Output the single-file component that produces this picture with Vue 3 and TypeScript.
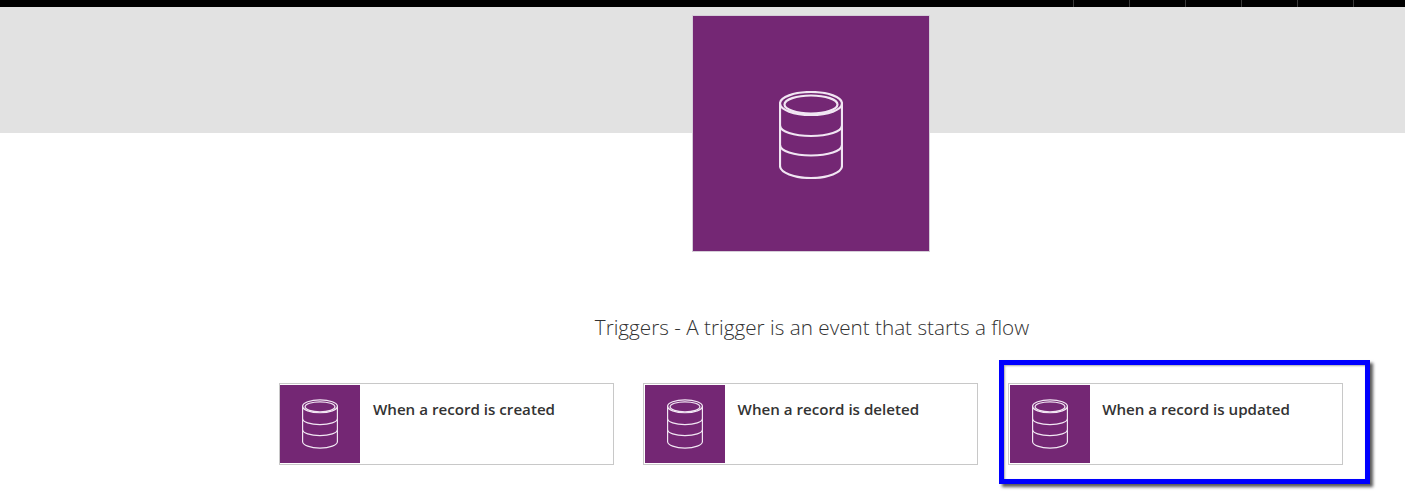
<script setup lang="ts">
const ticks: number[] = [0, 1, 2, 3, 4, 5];
const triggers: string[] = [
  "When a record is created",
  "When a record is deleted",
  "When a record is updated",
];
const highlighted = 2;
</script>

<template>
  <div class="page">
    <svg width="0" height="0" class="defs" aria-hidden="true">
      <symbol id="db" viewBox="0 0 64 88">
        <g fill="none" stroke="#f1e6f3" stroke-width="2.2">
          <ellipse cx="32" cy="12.5" rx="31" ry="11.5" />
          <ellipse cx="32" cy="13.5" rx="26.5" ry="9" />
          <path d="M1 12.5V75C1 81.5 15 87 32 87S63 81.5 63 75V12.5" />
          <path d="M1 34.5C1 40.5 15 45 32 45S63 40.5 63 34.5" />
          <path d="M1 54C1 60 15 64.5 32 64.5S63 60 63 54" />
        </g>
      </symbol>
    </svg>

    <header class="topbar">
      <span v-for="t in ticks" :key="t" class="tick"></span>
    </header>

    <section class="hero">
      <div class="tile">
        <svg class="icon-large"><use href="#db" /></svg>
      </div>
    </section>

    <h2 class="title">Triggers - A trigger is an event that starts a flow</h2>

    <div class="cards">
      <div v-for="(label, i) in triggers" :key="label" class="card">
        <div class="thumb">
          <svg class="icon-small"><use href="#db" /></svg>
        </div>
        <span class="label">{{ label }}</span>
        <div v-if="i === highlighted" class="callout"></div>
      </div>
    </div>
  </div>
</template>

<style scoped>
.page {
  width: 1405px;
  height: 495px;
  overflow: hidden;
  background: #fff;
  font-family: "Open Sans", "Noto Sans", sans-serif;
}
.defs {
  display: block;
  height: 0;
}
.topbar {
  height: 7px;
  background: #000;
  display: flex;
  justify-content: flex-end;
  margin-right: -4px;
}
.tick {
  width: 56px;
  box-sizing: border-box;
  border-left: 1px solid #3a3a3a;
}
.hero {
  height: 245px;
  box-sizing: border-box;
  padding: 8px 0 0 217px;
  display: flex;
  justify-content: center;
  background: linear-gradient(#e2e2e2 126px, #fff 126px);
}
.tile {
  width: 238px;
  height: 237px;
  box-sizing: border-box;
  border: 1px solid #d5cdd8;
  background: #742774;
  display: flex;
  align-items: center;
  justify-content: center;
}
.icon-large {
  width: 64px;
  height: 88px;
  margin-top: 2px;
}
.title {
  margin: 59px 0 0;
  padding-left: 219px;
  text-align: center;
  font-size: 20.7px;
  line-height: 32px;
  font-weight: 300;
  color: #333;
}
.cards {
  margin-top: 40px;
  padding-left: 278.7px;
  display: flex;
  gap: 29.6px;
}
.card {
  position: relative;
  width: 335px;
  height: 82px;
  box-sizing: border-box;
  border: 1px solid #c8c8c8;
  padding: 1px 0 0 0.7px;
  display: flex;
  align-items: flex-start;
  flex: none;
}
.thumb {
  width: 80px;
  height: 78px;
  background: #742774;
  display: flex;
  align-items: center;
  justify-content: center;
  flex: none;
}
.icon-small {
  width: 36px;
  height: 50px;
}
.label {
  margin: 14px 0 0 12.6px;
  font-size: 15.15px;
  line-height: 20px;
  font-weight: 600;
  color: #333;
}
.callout {
  position: absolute;
  left: -10px;
  top: -24px;
  width: 371px;
  height: 124px;
  box-sizing: border-box;
  border: 5px solid #0000ff;
  box-shadow: 3px 3px 3px rgba(0, 0, 0, 0.65), inset 1px 1px 2px rgba(0, 0, 0, 0.35);
  pointer-events: none;
}
</style>
